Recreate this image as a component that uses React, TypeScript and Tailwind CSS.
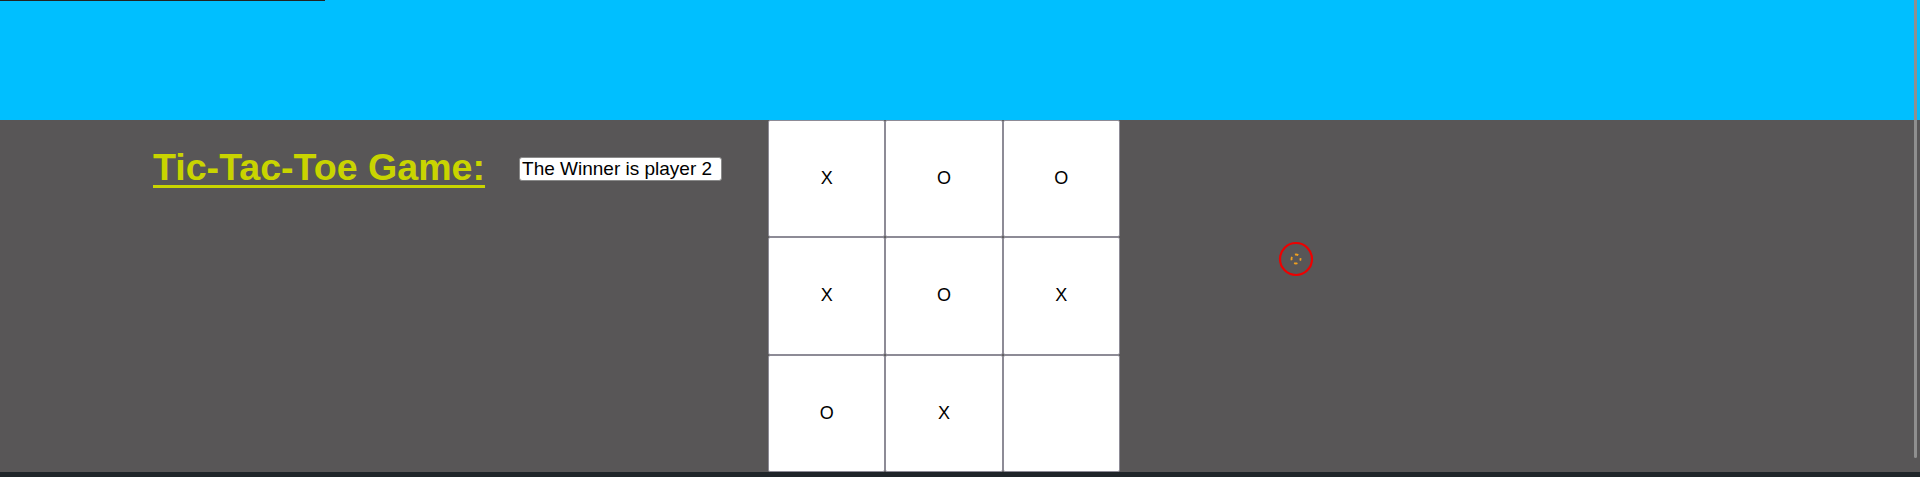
const board = ['X', 'O', 'O', 'X', 'O', 'X', 'O', 'X', ''];

export default function App() {
  return (
    <div className="relative flex h-[477px] w-[1920px] flex-col overflow-hidden font-['Liberation_Sans',Arial,sans-serif]">
      <div className="absolute left-0 top-0 h-px w-[325px] bg-[#222222]" />
      <header className="h-[120px] shrink-0 bg-[#00bfff]" />

      <main className="flex flex-1 items-start bg-[#585657] pl-[153px]">
        <h1 className="mt-[29px] text-[37.6px] font-bold leading-none text-[#c9d400] underline decoration-[3px] underline-offset-[5px]">
          Tic-Tac-Toe Game:
        </h1>
        <input
          readOnly
          value="The Winner is player 2"
          className="ml-[34px] mt-[37px] h-[24px] w-[203px] rounded-[3px] border border-[#8a8a8a] bg-white px-[2px] text-[19px] leading-none text-black outline-none"
        />
        <div className="ml-[46px] grid h-[352px] w-[352px] grid-cols-3">
          {board.map((cell, i) => (
            <div
              key={i}
              className="flex items-center justify-center rounded-[2px] border border-[#8d8b96] bg-white text-[18px] text-black"
            >
              {cell}
            </div>
          ))}
        </div>
      </main>

      <div className="h-[5px] shrink-0 bg-[#1f2529]" />

      <div className="absolute right-[3px] top-0 h-[458px] w-[3px] rounded-b-sm bg-[#8f8f8f]" />

      <svg className="absolute left-[1276px] top-[239px]" width="40" height="40" viewBox="0 0 40 40">
        <circle cx="20" cy="20" r="16" fill="none" stroke="#ee0000" strokeWidth="2.2" />
        <circle cx="20" cy="20" r="4.5" fill="none" stroke="#f0a020" strokeWidth="1.8" strokeDasharray="3.5 3.6" strokeDashoffset="1.75" />
      </svg>
    </div>
  );
}
